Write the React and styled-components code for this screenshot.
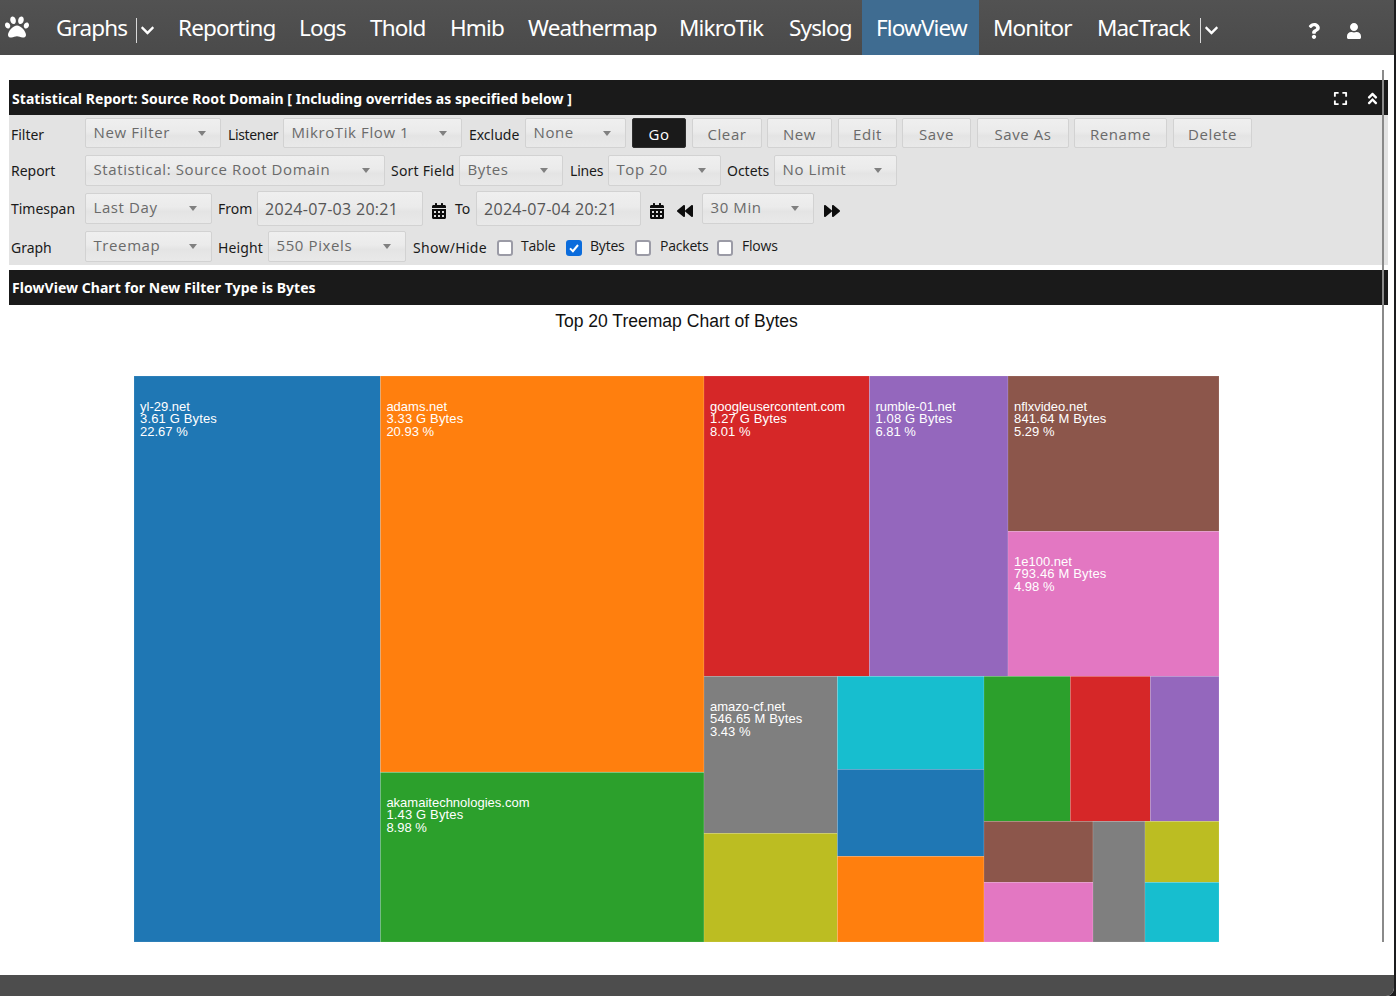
import React from "react";
import styled, { createGlobalStyle } from "styled-components";
import { FaPaw, FaQuestion, FaUser, FaExpand, FaAngleDoubleUp, FaCalendarAlt, FaBackward, FaForward, FaChevronDown } from "react-icons/fa";

const Global = createGlobalStyle`
  html, body { margin: 0; padding: 0; background: #1c1c1e; }
  body { font-family: "Noto Sans", "Open Sans", sans-serif; }
`;
const Shell = styled.div`
  position: relative; width: 1394px; height: 996px; background: #fff;
  display: flex; flex-direction: column; overflow: hidden;
  border-bottom-right-radius: 8px;
`;
const Header = styled.header`
  height: 55px; flex: none; display: flex; align-items: stretch;
  background: linear-gradient(#525252, #4a4a4a); color: #fff;
`;
const PawSlot = styled.div`
  width: 44px; display: flex; align-items: flex-start; padding: 15px 0 0 5px; font-size: 24px; box-sizing: border-box;
`;
const NavItem = styled.a`
  display: flex; align-items: center; box-sizing: border-box; width: ${p => p.$w}px; padding-left: ${p => p.$pl ?? 12}px;
  font-size: 22.5px; letter-spacing: -0.85px; white-space: nowrap; padding-bottom: 1px;
  background: ${p => (p.$active ? "#3f6c91" : "transparent")};
`;
const Caret = styled.span`
  display: flex; align-items: center; border-left: 1px solid #d8d8d8; height: 25px; margin: 6px 0 0 ${p => p.$ml}px; padding-left: 3px; font-size: 15px;
`;
const Tools = styled.div`
  margin-left: auto; display: flex; align-items: center; gap: 24px; padding: 7px 32px 0 0; font-size: 16px;
`;
const Content = styled.main`
  flex: 1; padding: 25px 6px 0 9px; min-height: 0;
`;
const TitleBar = styled.div`
  height: 35px; display: flex; align-items: center; justify-content: space-between;
  background: #1a1a1a; color: #fff; font-weight: 700; font-size: 14px; letter-spacing: 0.05px; padding: ${p => p.$pt}px 8px 0 3px; box-sizing: border-box;
`;
const TitleIcons = styled.div`
  display: flex; align-items: center; gap: 17px; font-size: 15px;
`;
const Panel = styled.form`
  background: #e3e3e3; padding: 3px 0 3px 2px; display: flex; flex-direction: column; row-gap: 7px; margin-bottom: 5px;
`;
const Row = styled.div`
  display: flex; align-items: center; flex: none; height: ${p => p.$h || 31}px;
`;
const Label = styled.label`
  width: ${p => p.$w}px; margin-left: ${p => p.$ml || 0}px; flex: none; font-size: 14px; letter-spacing: ${p => p.$ls ?? -0.02}px; color: #1a1a1a; white-space: nowrap; padding-top: ${p => p.$pt ?? 2}px;
`;
const fieldBg = `linear-gradient(#efefef 0%, #ebebeb 45%, #e4e4e4 60%, #e9e9e9 100%)`;
const Select = styled.div`
  width: ${p => p.$w}px; margin-left: ${p => p.$ml || 0}px; height: 100%; flex: none; box-sizing: border-box;
  display: flex; align-items: center; justify-content: space-between; padding: 0 14px 3px 7.5px;
  border: 1px solid #d2d2d2; border-radius: 2px; background: ${fieldBg};
  font-family: "Open Sans", sans-serif; font-size: 15px; letter-spacing: 0.6px; color: #6a6a6a; white-space: nowrap;
  &::after { content: ""; border: 4.5px solid transparent; border-top: 5px solid #808080; border-bottom: 0; margin-top: 3px; }
`;
const DateInput = styled.div`
  width: ${p => p.$w}px; margin-left: ${p => p.$ml || 0}px; height: 35px; flex: none; box-sizing: border-box;
  display: flex; align-items: center; padding-left: 7px; border: 1px solid #d2d2d2; border-radius: 2px; background: ${fieldBg};
  font-family: "Open Sans", sans-serif; font-size: 16px; letter-spacing: 0.3px; color: #555;
`;
const Button = styled.button`
  width: ${p => p.$w}px; margin-left: ${p => p.$ml}px; height: 100%; flex: none; box-sizing: border-box; padding: 2px 0 0;
  border: 1px solid ${p => (p.$primary ? "#2e2e2e" : "#d2d2d2")}; border-radius: 2px;
  background: ${p => (p.$primary ? "#1a1a1a" : fieldBg)}; color: ${p => (p.$primary ? "#fff" : "#6a6a6a")};
  font-family: "Open Sans", sans-serif; font-size: 15px; letter-spacing: 0.6px;
`;
const IconSlot = styled.span`
  display: flex; margin-left: ${p => p.$ml}px; font-size: ${p => p.$size}px; color: #0d0d0d; flex: none; padding-top: 5px;
`;
const CheckBox = styled.span`
  width: 16px; height: 16px; margin-left: ${p => p.$ml}px; flex: none; box-sizing: border-box; border-radius: 3px; display: flex; align-items: center; justify-content: center;
  border: 2px solid ${p => (p.$on ? "#0b6cdc" : "#9b9ba6")}; background: ${p => (p.$on ? "#0b6cdc" : "#fff")}; margin-top: 2px;
`;
const CheckLabel = styled(Label)`
  font-family: "Open Sans", sans-serif; padding-top: 0; margin-top: -3px; letter-spacing: -0.2px;
`;
const ChartArea = styled.svg`
  display: block; width: 1379px; height: 670px;
`;
const Footer = styled.footer`
  height: 21px; flex: none; background: #4d4d4d;
`;
const ScrollMark = styled.div`
  position: absolute; left: 1382px; top: 70px; width: 2px; height: 872px; background: #8a8a8a;
`;

const cells = [
  [134, 376, 246.4, 566, "#1f77b4", ["yl-29.net", "3.61 G Bytes", "22.67 %"]],
  [380.4, 376, 323.6, 396, "#ff7f0e", ["adams.net", "3.33 G Bytes", "20.93 %"]],
  [380.4, 772.3, 323.6, 169.7, "#2ca02c", ["akamaitechnologies.com", "1.43 G Bytes", "8.98 %"]],
  [704, 376, 165.4, 300.3, "#d62728", ["googleusercontent.com", "1.27 G Bytes", "8.01 %"]],
  [869.4, 376, 138.6, 300.3, "#9467bd", ["rumble-01.net", "1.08 G Bytes", "6.81 %"]],
  [1008, 376, 211, 155.3, "#8c564b", ["nflxvideo.net", "841.64 M Bytes", "5.29 %"]],
  [1008, 531.3, 211, 145, "#e377c2", ["1e100.net", "793.46 M Bytes", "4.98 %"]],
  [704, 676.3, 133.4, 157, "#7f7f7f", ["amazo-cf.net", "546.65 M Bytes", "3.43 %"]],
  [704, 833.3, 133.4, 108.7, "#bcbd22"],
  [837.4, 676.3, 146.6, 93, "#17becf"],
  [837.4, 769.3, 146.6, 87, "#1f77b4"],
  [837.4, 856.3, 146.6, 85.7, "#ff7f0e"],
  [984, 676.3, 86.3, 145, "#2ca02c"],
  [1070.3, 676.3, 80, 145, "#d62728"],
  [1150.3, 676.3, 68.7, 145, "#9467bd"],
  [984, 821.3, 109, 61, "#8c564b"],
  [984, 882.3, 109, 59.7, "#e377c2"],
  [1093, 821.3, 52, 120.7, "#7f7f7f"],
  [1145, 821.3, 74, 61, "#bcbd22"],
  [1145, 882.3, 74, 59.7, "#17becf"],
];
const OX = 9, OY = 305;
const lineOffset = [35, 47, 60];

const Treemap = () => (
  <ChartArea viewBox="0 0 1379 670" fontFamily='"Liberation Sans", Arial, sans-serif'>
    <text x={667.5} y={22} textAnchor="middle" fontSize="17.55" fill="#111">Top 20 Treemap Chart of Bytes</text>
    {cells.map(([x, y, w, h, c, t], i) => (
      <g key={i}>
        <rect x={x - OX} y={y - OY} width={w} height={h} fill={c} stroke="#fff" strokeOpacity="0.25" strokeWidth="0.5" />
        {t && t.map((s, j) => (
          <text key={j} x={x - OX + 6} y={Math.round(y) - OY + lineOffset[j]} fontSize="13" letterSpacing={j === 1 ? 0.15 : 0} fill="#fff">{s}</text>
        ))}
      </g>
    ))}
  </ChartArea>
);

const Check = () => (
  <svg width="12" height="12" viewBox="0 0 12 12"><path d="M2 6.4 L4.9 9.2 L10 3" fill="none" stroke="#fff" strokeWidth="2" /></svg>
);

export default function App() {
  return (
    <Shell>
      <Global />
      <Header>
        <PawSlot><FaPaw /></PawSlot>
        <NavItem $w={122}>Graphs<Caret $ml={9}><FaChevronDown /></Caret></NavItem>
        <NavItem $w={121}>Reporting</NavItem>
        <NavItem $w={71}>Logs</NavItem>
        <NavItem $w={80}>Thold</NavItem>
        <NavItem $w={78}>Hmib</NavItem>
        <NavItem $w={151}>Weathermap</NavItem>
        <NavItem $w={110}>MikroTik</NavItem>
        <NavItem $w={85}>Syslog</NavItem>
        <NavItem $w={117} $pl={14} $active>FlowView</NavItem>
        <NavItem $w={106} $pl={14}>Monitor</NavItem>
        <NavItem $w={130}>MacTrack<Caret $ml={10}><FaChevronDown /></Caret></NavItem>
        <Tools><FaQuestion /><FaUser /></Tools>
      </Header>
      <Content>
        <TitleBar $pt={1}>
          <span>Statistical Report: Source Root Domain [ Including overrides as specified below ]</span>
          <TitleIcons><FaExpand /><FaAngleDoubleUp /></TitleIcons>
        </TitleBar>
        <Panel>
          <Row $h={30}>
            <Label $w={74}>Filter</Label>
            <Select $w={136}>New Filter</Select>
            <Label $w={55} $ml={7} $ls={-0.35}>Listener</Label>
            <Select $w={179}>MikroTik Flow 1</Select>
            <Label $w={56} $ml={7}>Exclude</Label>
            <Select $w={101}>None</Select>
            <Button $w={54} $ml={6} $primary>Go</Button>
            <Button $w={70} $ml={6}>Clear</Button>
            <Button $w={65} $ml={5}>New</Button>
            <Button $w={59} $ml={6}>Edit</Button>
            <Button $w={69} $ml={5}>Save</Button>
            <Button $w={92} $ml={6}>Save As</Button>
            <Button $w={93} $ml={5}>Rename</Button>
            <Button $w={79} $ml={6}>Delete</Button>
          </Row>
          <Row>
            <Label $w={74} $pt={0}>Report</Label>
            <Select $w={300}>Statistical: Source Root Domain</Select>
            <Label $w={68} $ml={6} $pt={0} $ls={0.2}>Sort Field</Label>
            <Select $w={104}>Bytes</Select>
            <Label $w={38} $ml={7} $pt={0} $ls={-0.2}>Lines</Label>
            <Select $w={113}>Top 20</Select>
            <Label $w={47} $ml={6} $pt={0}>Octets</Label>
            <Select $w={123}>No Limit</Select>
          </Row>
          <Row>
            <Label $w={74} $pt={0}>Timespan</Label>
            <Select $w={127}>Last Day</Select>
            <Label $w={39} $ml={6} $pt={0}>From</Label>
            <DateInput $w={166}>2024-07-03 20:21</DateInput>
            <IconSlot $ml={8} $size={16}><FaCalendarAlt /></IconSlot>
            <Label $w={21} $ml={8} $pt={0}>To</Label>
            <DateInput $w={165}>2024-07-04 20:21</DateInput>
            <IconSlot $ml={8} $size={16}><FaCalendarAlt /></IconSlot>
            <IconSlot $ml={12} $size={16}><FaBackward /></IconSlot>
            <Select $w={112} $ml={9}>30 Min</Select>
            <IconSlot $ml={10} $size={16}><FaForward /></IconSlot>
          </Row>
          <Row>
            <Label $w={74}>Graph</Label>
            <Select $w={127}>Treemap</Select>
            <Label $w={50} $ml={6} $ls={0.1}>Height</Label>
            <Select $w={138}>550 Pixels</Select>
            <Label $w={74} $ml={7} $ls={0.3}>Show/Hide</Label>
            <CheckBox $ml={10} />
            <CheckLabel $w={37} $ml={8}>Table</CheckLabel>
            <CheckBox $ml={8} $on><Check /></CheckBox>
            <CheckLabel $w={37} $ml={8}>Bytes</CheckLabel>
            <CheckBox $ml={8} />
            <CheckLabel $w={50} $ml={9}>Packets</CheckLabel>
            <CheckBox $ml={7} />
            <CheckLabel $w={40} $ml={9}>Flows</CheckLabel>
          </Row>
        </Panel>
        <TitleBar $pt={0}><span>FlowView Chart for New Filter Type is Bytes</span></TitleBar>
        <Treemap />
      </Content>
      <Footer />
      <ScrollMark />
    </Shell>
  );
}
